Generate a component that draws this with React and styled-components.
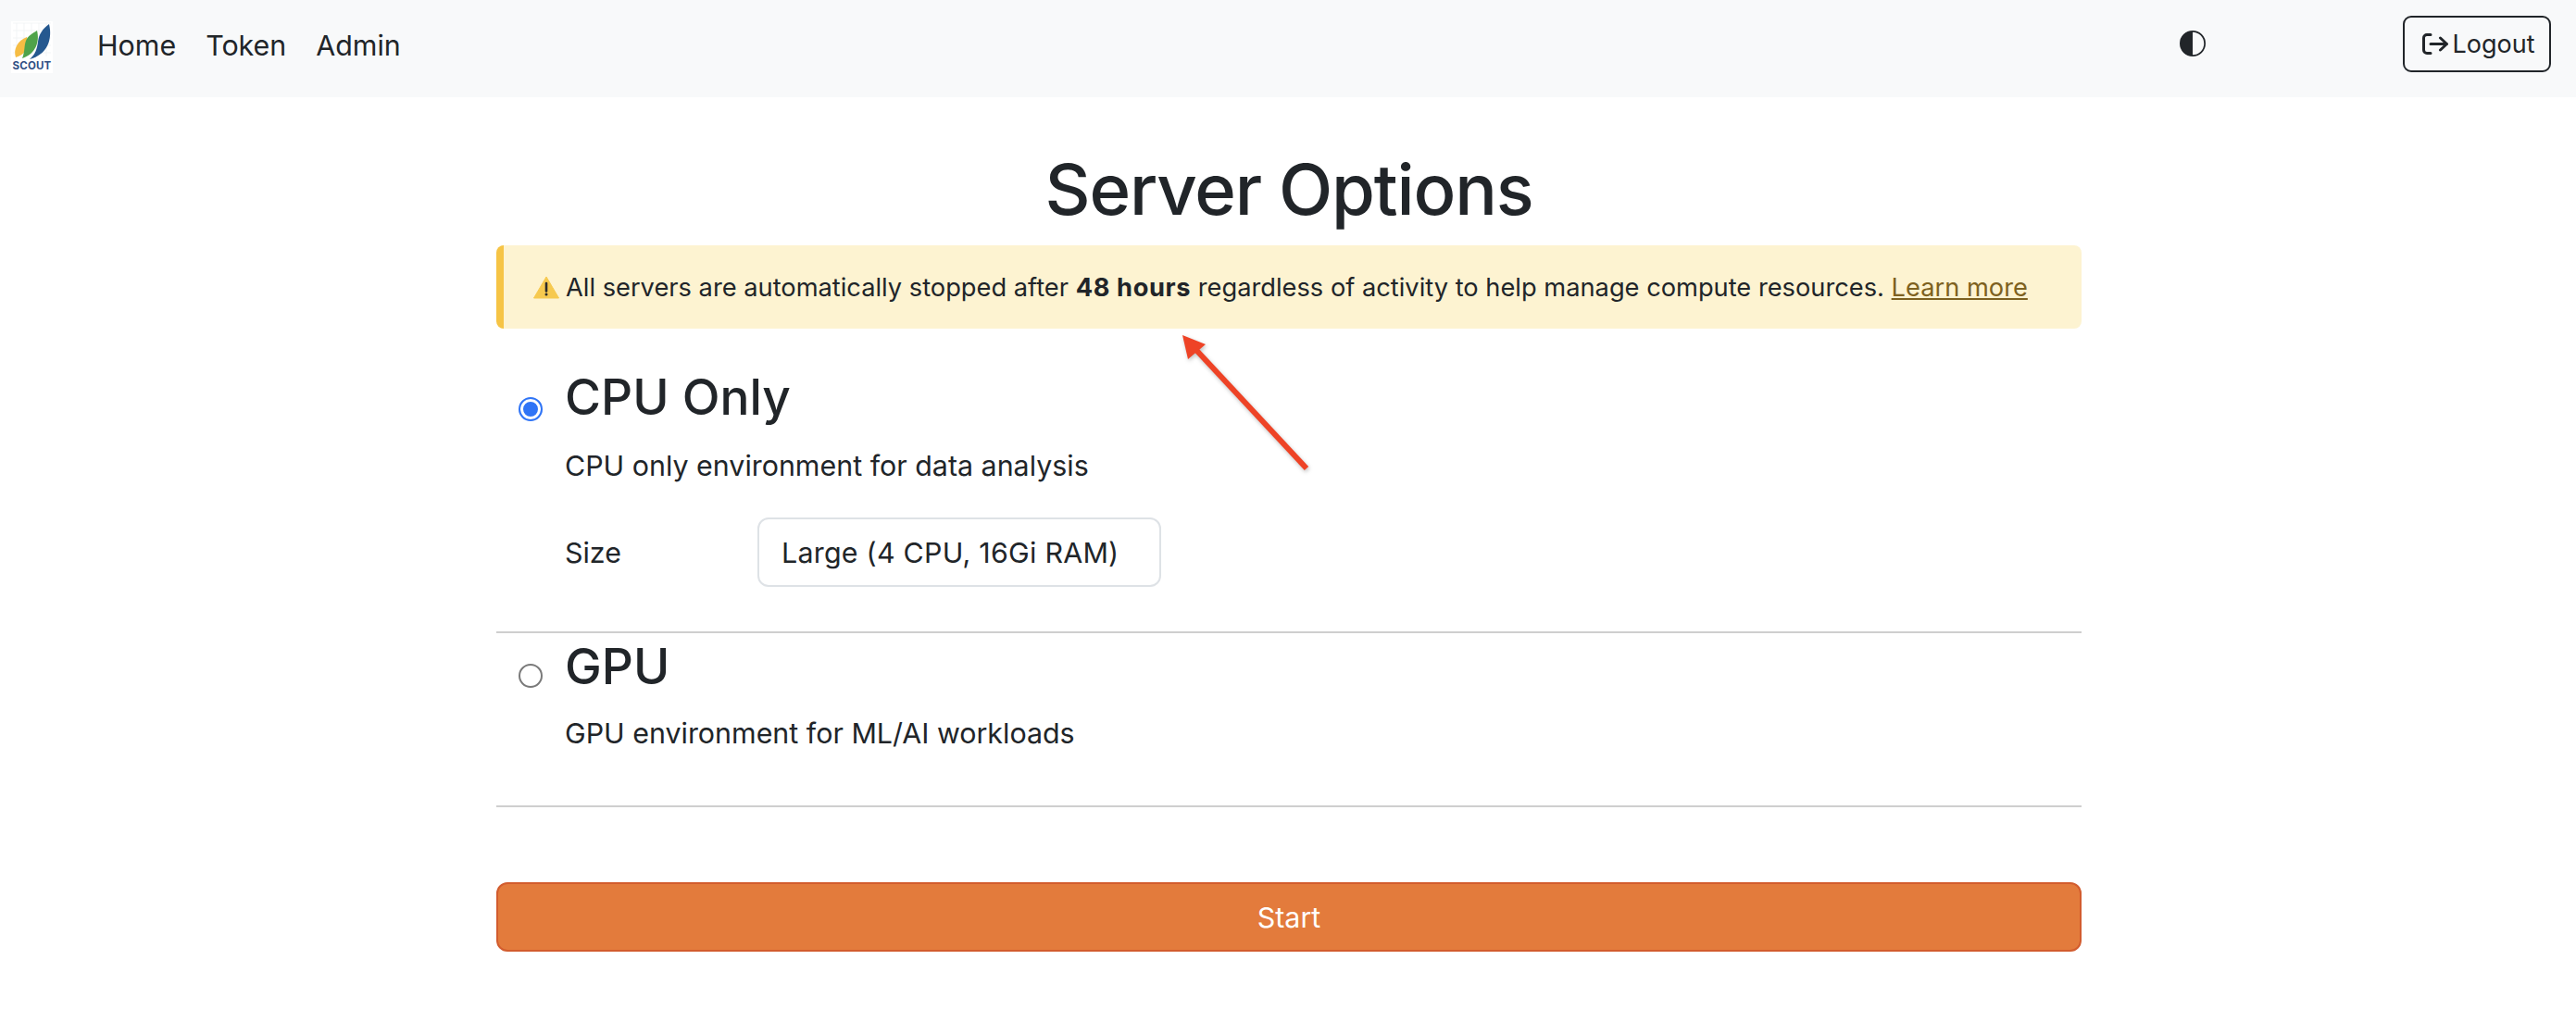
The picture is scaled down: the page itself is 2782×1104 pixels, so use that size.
import styled, { createGlobalStyle } from 'styled-components';

const GlobalStyle = createGlobalStyle`
  * { box-sizing: border-box; }
  html, body { margin: 0; background: #fff; }
  body {
    font-family: Inter, "Liberation Sans", sans-serif;
    color: #212529;
    -webkit-font-smoothing: antialiased;
  }
`;

const Page = styled.div`
  position: relative;
  height: 1104px;
  overflow: hidden;
`;

const Navbar = styled.nav`
  height: 105px;
  background: #f8f9fa;
  display: flex;
  align-items: center;
  padding: 0 27px 0 12px;
`;

const Brand = styled.div`
  width: 45px;
  height: 56px;
  background: #fff;
  margin-top: -3px;
  display: flex;
  flex-direction: column;
  align-items: center;
  line-height: 1;
`;

const BrandName = styled.span`
  font-size: 11.5px;
  font-weight: 700;
  letter-spacing: 0.2px;
  color: #2f4f84;
  margin-top: -1px;
`;

const NavLinks = styled.div`
  display: flex;
  gap: 32px;
  margin-left: 48px;
  margin-top: -7px;
`;

const NavLink = styled.a`
  font-size: 30.4px;
  color: #212529;
`;

const ThemeToggle = styled.div`
  margin-left: auto;
  margin-right: 213px;
  margin-top: -11px;
  display: flex;
`;

const LogoutButton = styled.button`
  width: 160px;
  height: 61px;
  margin-top: -11px;
  border: 2px solid #212529;
  border-radius: 9px;
  background: transparent;
  color: #212529;
  font: inherit;
  font-size: 27px;
  display: flex;
  align-items: center;
  justify-content: center;
  gap: 4px;
  padding: 0 0 0 4px;
`;

const Container = styled.main`
  width: 1712px;
  margin-left: 536px;
  display: flex;
  flex-direction: column;
`;

const Title = styled.h1`
  margin: 0;
  height: 160px;
  line-height: 198px;
  font-size: 76px;
  font-weight: 500;
  letter-spacing: -1.2px;
  text-align: center;
`;

const Alert = styled.div`
  height: 90px;
  display: flex;
  align-items: center;
  gap: 7px;
  padding-left: 32px;
  background: #fdf3d1;
  border-left: 8px solid #f6c445;
  border-radius: 8px;
  font-size: 27.25px;
  white-space: pre;
`;

const AlertStrong = styled.b`
  font-weight: 700;
  letter-spacing: 0.6px;
`;

const AlertLink = styled.a`
  color: #7d6120;
  text-decoration: underline;
`;

const Option = styled.section`
  height: ${(p) => p.$height}px;
  padding-left: 24px;
  display: grid;
  grid-template-columns: 50px 1fr;
  align-content: start;
  border-bottom: 2px solid #cfcfcf;
`;

const Radio = styled.input`
  appearance: none;
  width: 26px;
  height: 26px;
  margin: ${(p) => p.$top}px 0 0;
  border-radius: 50%;
  background: #fff;
  border: ${(p) => (p.checked ? '2px solid #2f74f6' : '2px solid #7a7a7a')};
  box-shadow: ${(p) => (p.checked ? 'inset 0 0 0 3px #fff, inset 0 0 0 13px #2f74f6' : 'none')};
`;

const OptionBody = styled.div`
  display: flex;
  flex-direction: column;
`;

const OptionTitle = styled.h2`
  margin: ${(p) => p.$top}px 0 0;
  font-size: 53.2px;
  font-weight: 500;
  line-height: 68px;
`;

const OptionText = styled.p`
  margin: ${(p) => p.$top}px 0 0;
  font-size: 30.4px;
  line-height: 40px;
`;

const SizeRow = styled.div`
  display: flex;
  align-items: center;
  margin-top: 36px;
`;

const SizeLabel = styled.label`
  width: 208px;
  font-size: 30.4px;
`;

const SizeSelect = styled.div`
  width: 436px;
  height: 75px;
  display: flex;
  align-items: center;
  padding-left: 24px;
  border: 2px solid #dee2e6;
  border-radius: 12px;
  font-size: 30.4px;
  letter-spacing: 0.25px;
`;

const StartButton = styled.button`
  height: 75px;
  margin-top: 81px;
  background: #e37b3c;
  border: 2px solid #d25c2e;
  border-radius: 12px;
  color: #fff;
  font: inherit;
  font-size: 30.4px;
`;

const Annotation = styled.svg`
  position: absolute;
  left: 0;
  top: 0;
  pointer-events: none;
  filter: drop-shadow(1px 2px 2px rgba(0, 0, 0, 0.25));
`;

function ScoutLogo() {
  return (
    <svg width="45" height="44" viewBox="0 0 45 44">
      <path d="M2 2H43M2 10H43M2 18H43M2 26H43M2 34H43M6 2V38M14 2V38M22 2V38M30 2V38M38 2V38" stroke="#eef0f2" strokeWidth="0.7" fill="none" />
      <path d="M5 39C2 30 7 21 17 17C20 27 16 36 5 39Z" fill="#f6bd44" />
      <path d="M12 40C15 33 14 26 16 21C18 16 23 13 28 10C31 22 27 35 12 40Z" fill="#4fa34a" />
      <path d="M20 41C26 36 28 30 29 22C30 14 34 8 41 3C45 20 39 36 20 41Z" fill="#25588f" />
    </svg>
  );
}

function ContrastIcon() {
  return (
    <svg width="28" height="28" viewBox="0 0 16 16" fill="#212529">
      <path d="M8 15A7 7 0 1 0 8 1v14zm0 1A8 8 0 1 1 8 0a8 8 0 0 1 0 16z" />
    </svg>
  );
}

function LogoutIcon() {
  return (
    <svg width="28" height="23" viewBox="0 0 28 23" fill="none" stroke="#212529" strokeWidth="3" strokeLinecap="round" strokeLinejoin="round">
      <path d="M9 1.500H5A3.500 3.500 0 0 0 1.500 5V18A3.500 3.500 0 0 0 5 21.500H9" />
      <path d="M9 11.500H26.500M19.500 5L26.500 11.500L19.500 18" />
    </svg>
  );
}

function WarningIcon() {
  return (
    <svg width="28" height="25" viewBox="0 0 28 25">
      <path d="M14 1L27.500 24H.5Z" fill="#f6c94f" stroke="#f6c94f" strokeLinejoin="round" />
      <path d="M14 8L14 16.500" stroke="#2b2b2b" strokeWidth="2.600" strokeLinecap="round" />
      <circle cx="14" cy="20" r="1.500" fill="#2b2b2b" />
    </svg>
  );
}

export default function App() {
  return (
    <Page>
      <GlobalStyle />
      <Navbar>
        <Brand>
          <ScoutLogo />
          <BrandName>SCOUT</BrandName>
        </Brand>
        <NavLinks>
          <NavLink>Home</NavLink>
          <NavLink>Token</NavLink>
          <NavLink>Admin</NavLink>
        </NavLinks>
        <ThemeToggle>
          <ContrastIcon />
        </ThemeToggle>
        <LogoutButton>
          <LogoutIcon />
          Logout
        </LogoutButton>
      </Navbar>
      <Container>
        <Title>Server Options</Title>
        <Alert>
          <WarningIcon />
          <span>
            All servers are automatically stopped after <AlertStrong>48 hours</AlertStrong> regardless of activity to help manage compute resources. <AlertLink>Learn more</AlertLink>
          </span>
        </Alert>
        <Option $height={329}>
          <Radio type="radio" name="profile" checked readOnly $top={74} />
          <OptionBody>
            <OptionTitle $top={40}>CPU Only</OptionTitle>
            <OptionText $top={20}>CPU only environment for data analysis</OptionText>
            <SizeRow>
              <SizeLabel>Size</SizeLabel>
              <SizeSelect>Large (4 CPU, 16Gi RAM)</SizeSelect>
            </SizeRow>
          </OptionBody>
        </Option>
        <Option $height={188}>
          <Radio type="radio" name="profile" readOnly $top={33} />
          <OptionBody>
            <OptionTitle $top={2}>GPU</OptionTitle>
            <OptionText $top={18}>GPU environment for ML/AI workloads</OptionText>
          </OptionBody>
        </Option>
        <StartButton>Start</StartButton>
      </Container>
      <Annotation width="2782" height="1104">
        <path d="M1411 506L1289 375" stroke="#ee4326" strokeWidth="6" />
        <path d="M1277 362L1302 372L1283 388Z" fill="#ee4326" />
      </Annotation>
    </Page>
  );
}
